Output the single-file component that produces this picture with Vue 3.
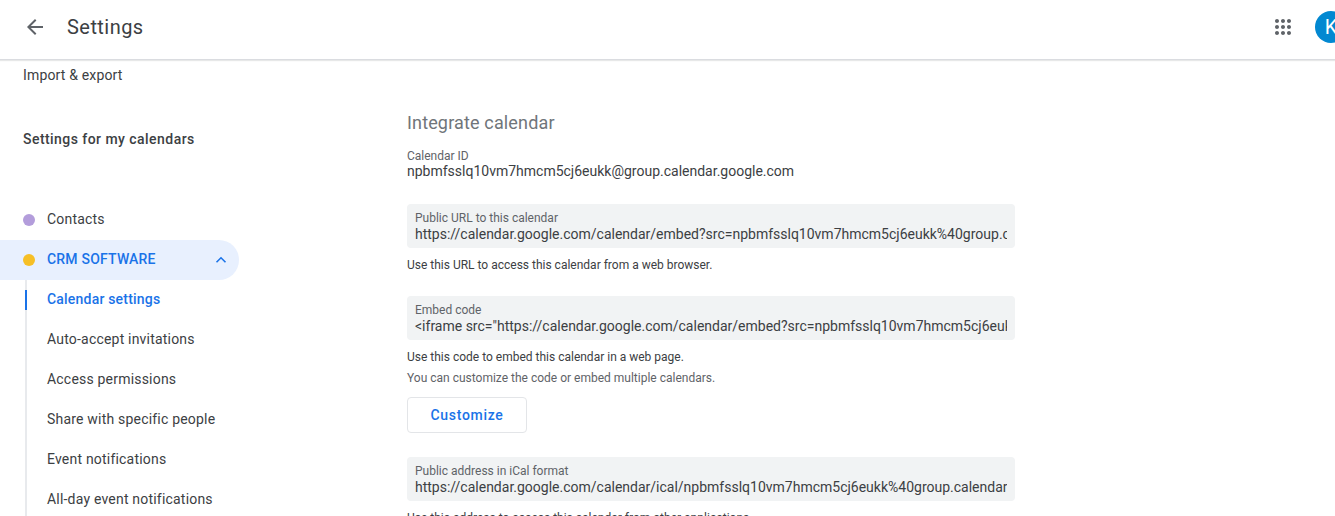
<script setup>
const links = [
  { text: 'Calendar settings', active: true },
  { text: 'Auto-accept invitations' },
  { text: 'Access permissions' },
  { text: 'Share with specific people' },
  { text: 'Event notifications' },
  { text: 'All-day event notifications' }
]
</script>

<template>
  <div class="page">
    <header class="top">
      <svg class="back" width="24" height="24" viewBox="0 0 24 24"><path d="M20 11H7.83l5.59-5.59L12 4l-8 8 8 8 1.41-1.41L7.83 13H20v-2z" fill="#5f6368"/></svg>
      <h1 class="title">Settings</h1>
      <svg class="apps" width="24" height="24" viewBox="0 0 24 24" fill="#5f6368"><path d="M6 8c1.1 0 2-.9 2-2s-.9-2-2-2-2 .9-2 2 .9 2 2 2zm6 12c1.1 0 2-.9 2-2s-.9-2-2-2-2 .9-2 2 .9 2 2 2zm-6 0c1.1 0 2-.9 2-2s-.9-2-2-2-2 .9-2 2 .9 2 2 2zm0-6c1.1 0 2-.9 2-2s-.9-2-2-2-2 .9-2 2 .9 2 2 2zm6 0c1.1 0 2-.9 2-2s-.9-2-2-2-2 .9-2 2 .9 2 2 2zm4-8c0 1.1.9 2 2 2s2-.9 2-2-.9-2-2-2-2 .9-2 2zm-4 2c1.1 0 2-.9 2-2s-.9-2-2-2-2 .9-2 2 .9 2 2 2zm6 6c1.1 0 2-.9 2-2s-.9-2-2-2-2 .9-2 2 .9 2 2 2zm0 6c1.1 0 2-.9 2-2s-.9-2-2-2-2 .9-2 2 .9 2 2 2z"/></svg>
      <div class="avatar">K</div>
    </header>

    <div class="body">
      <aside class="side">
        <div class="import">Import &amp; export</div>
        <div class="side-head">Settings for my calendars</div>
        <div class="cal"><span class="dot purple"></span><span class="cal-name">Contacts</span></div>
        <div class="cal open">
          <span class="dot yellow"></span><span class="cal-name">CRM SOFTWARE</span>
          <svg class="chev" width="12" height="8" viewBox="0 0 12 8"><path d="M1.5 6.2 6 1.8l4.5 4.4" fill="none" stroke="#1a73e8" stroke-width="1.6"/></svg>
        </div>
        <ul class="links">
          <li v-for="l in links" :key="l.text" class="link" :class="{ active: l.active }">{{ l.text }}</li>
        </ul>
      </aside>

      <main class="main">
        <h2 class="section">Integrate calendar</h2>
        <div class="id-label">Calendar ID</div>
        <div class="id-value">npbmfsslq10vm7hmcm5cj6eukk@group.calendar.google.com</div>

        <div class="box first">
          <div class="box-label">Public URL to this calendar</div>
          <div class="box-value">https://calendar.google.com/calendar/embed?src=npbmfsslq10vm7hmcm5cj6eukk%40group.calendar.google.com</div>
        </div>
        <p class="help">Use this URL to access this calendar from a web browser.</p>

        <div class="box second">
          <div class="box-label">Embed code</div>
          <div class="box-value">&lt;iframe src="https://calendar.google.com/calendar/embed?src=npbmfsslq10vm7hmcm5cj6eukk%40group.calendar.google.com</div>
        </div>
        <p class="help">Use this code to embed this calendar in a web page.</p>
        <p class="help muted">You can customize the code or embed multiple calendars.</p>
        <button class="custom">Customize</button>

        <div class="box third">
          <div class="box-label">Public address in iCal format</div>
          <div class="box-value">https://calendar.google.com/calendar/ical/npbmfsslq10vm7hmcm5cj6eukk%40group.calendar.google.com/public/basic.ics</div>
        </div>
        <p class="help">Use this address to access this calendar from other applications.</p>
      </main>
    </div>
  </div>
</template>

<style>
html, body { margin: 0; height: 100%; overflow: hidden; background: #fff; }
</style>

<style scoped>
.page {
  width: 1335px;
  height: 516px;
  overflow: hidden;
  font-family: Roboto, "Liberation Sans", sans-serif;
  color: #3c4043;
}
.top {
  height: 60px;
  box-sizing: border-box;
  border-bottom: 1px solid #dadce0;
  box-shadow: 0 1px 1px rgba(60, 64, 67, .12);
  display: flex;
  align-items: center;
  padding-left: 23px;
  overflow: hidden;
  position: relative;
}
.back { flex: none; margin-bottom: 5px; }
.title {
  margin: 0 0 5px 20px;
  font-size: 20px;
  font-weight: 400;
  letter-spacing: .45px;
  color: #3c4043;
}
.apps { margin-left: auto; margin-bottom: 5px; flex: none; }
.avatar {
  flex: none;
  width: 32px;
  height: 32px;
  border-radius: 50%;
  background: #0288d1;
  color: #fff;
  font-size: 20px;
  line-height: 32px;
  text-align: center;
  margin: 0 -12px 5px 20px;
}
.body { display: flex; }
.side { width: 239px; flex: none; font-size: 14px; }
.import { height: 30px; line-height: 30px; padding-left: 23px; letter-spacing: .16px; }
.side-head {
  margin-top: 34px;
  height: 30px;
  line-height: 30px;
  padding-left: 23px;
  font-weight: 500;
  font-size: 14px;
  letter-spacing: .45px;
}
.cal {
  height: 40px;
  display: flex;
  align-items: center;
  padding-left: 23px;
  letter-spacing: .2px;
}
.cal-name { margin-bottom: 2px; }
.side-head + .cal { margin-top: 46px; }
.dot { width: 12px; height: 12px; border-radius: 50%; margin-right: 12px; }
.purple { background: #b39ddb; }
.yellow { background: #f6bf26; }
.open {
  background: #e8f0fe;
  color: #1a73e8;
  font-weight: 500;
  border-radius: 0 20px 20px 0;
  position: relative;
}
.chev { position: absolute; right: 12px; top: 16px; }
.links {
  list-style: none;
  margin: 0 0 0 25px;
  padding: 0;
  border-left: 2px solid #e8eaed;
}
.link {
  height: 40px;
  line-height: 38px;
  padding-left: 20px;
  letter-spacing: .2px;
  position: relative;
}
.link.active { color: #1a73e8; font-weight: 500; }
.link.active::before {
  content: "";
  position: absolute;
  left: -2px;
  top: 10px;
  width: 2px;
  height: 20px;
  background: #1a73e8;
}
.main { margin-left: 168px; width: 608px; }
.section {
  margin: 51px 0 0;
  font-size: 18px;
  line-height: 23px;
  font-weight: 400;
  letter-spacing: .15px;
  color: #70757a;
}
.id-label { margin-top: 14px; font-size: 12px; line-height: 16px; color: #5f6368; }
.id-value { font-size: 14px; line-height: 14px; }
.box {
  height: 44px;
  box-sizing: border-box;
  background: #f1f3f4;
  border-radius: 4px;
  padding: 7px 8px 0;
}
.first { margin-top: 26px; }
.second { margin-top: 24px; }
.third { margin-top: 24px; }
.box-label { font-size: 12px; line-height: 14px; color: #5f6368; }
.box-value {
  font-size: 14px;
  line-height: 18px;
  white-space: nowrap;
  overflow: hidden;
}
.help { margin: 10px 0 0; font-size: 12px; line-height: 14px; color: #3c4043; }
.help.muted { margin-top: 7px; color: #5f6368; }
.custom {
  display: block;
  margin-top: 12px;
  width: 120px;
  height: 36px;
  background: #fff;
  border: 1px solid #e3e5e8;
  border-radius: 4px;
  color: #1a73e8;
  font-family: inherit;
  font-size: 14px;
  font-weight: 500;
  letter-spacing: .7px;
}
</style>
